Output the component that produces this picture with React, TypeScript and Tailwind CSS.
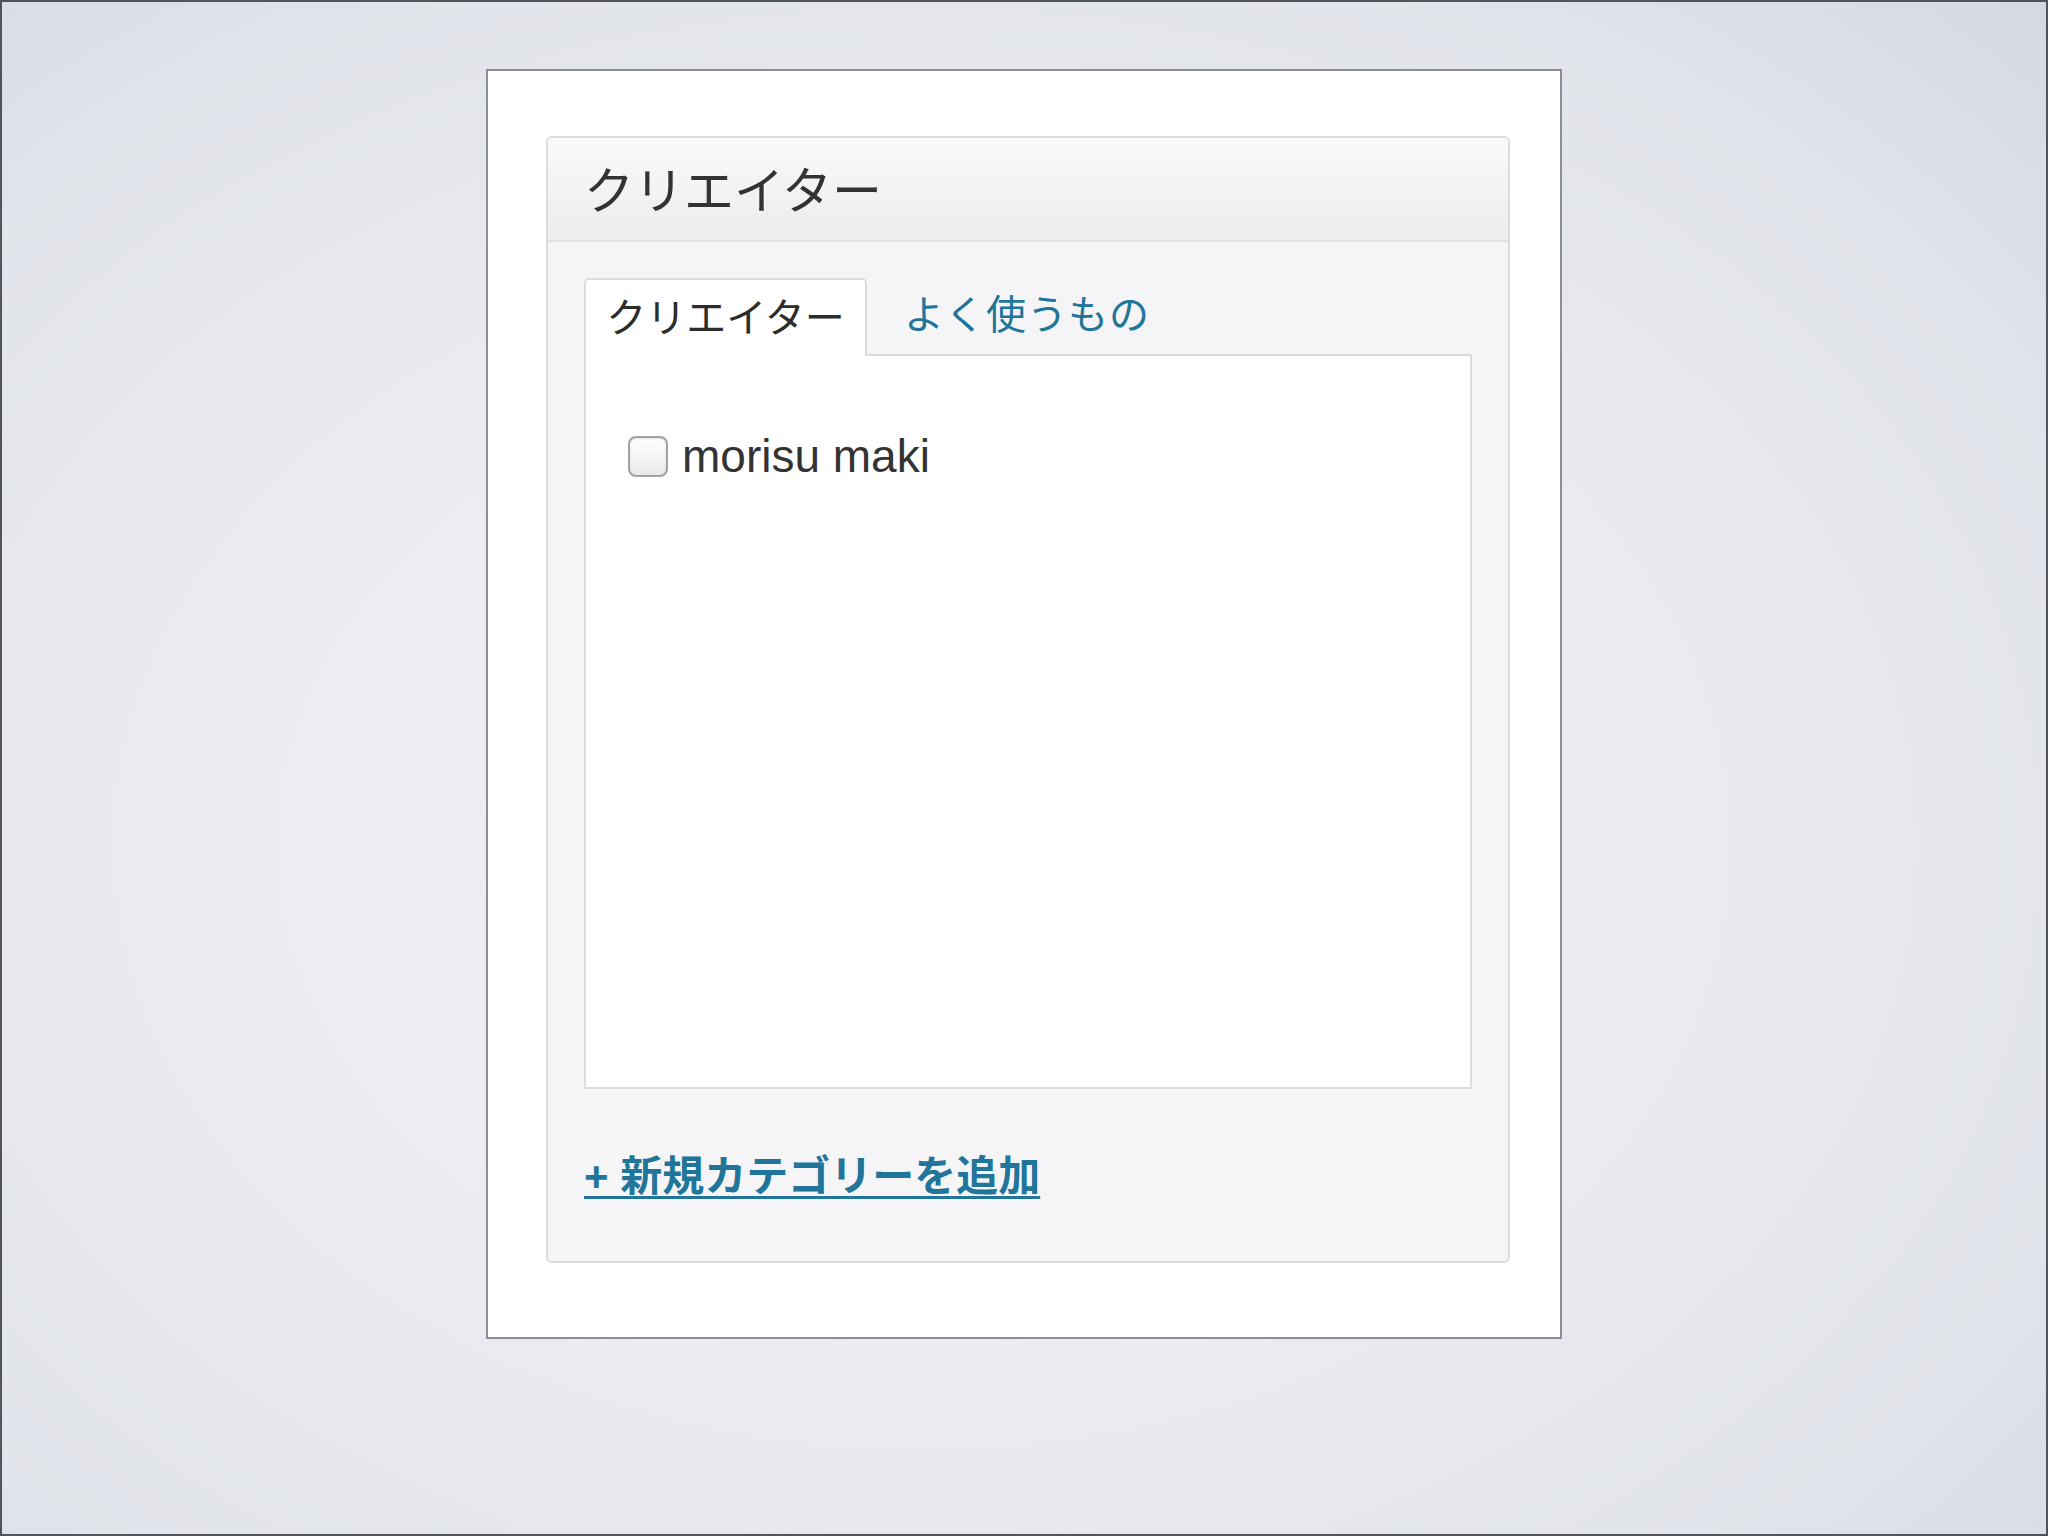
import React from "react";

export default function App() {
  const jp = { fontFamily: '"Liberation Sans", "Noto Sans CJK JP", sans-serif' };
  return (
    <div
      className="w-[2048px] h-[1536px] border-2 border-[#50555c] bg-[radial-gradient(ellipse_at_45%_55%,#f1f1f4_0%,#ebecf0_45%,#e0e3e9_80%,#d5d9e0_100%)] pt-[67px] pl-[484px] overflow-hidden"
      style={jp}
    >
      <div className="w-[1076px] h-[1270px] border-2 border-[#8b8e93] bg-white pt-[65px] pl-[58px]">
        <div className="w-[964px] h-[1127px] rounded-[6px] border-2 border-[#dcdcde] bg-[#f5f5f7] overflow-hidden flex flex-col">
          <div className="h-[104px] shrink-0 border-b-2 border-[#e2e2e4] bg-[linear-gradient(to_bottom,#fafafa,#ececed)] flex items-center pl-[36px] pt-[6px]">
            <span className="text-[50px] leading-none text-[#333333]">クリエイター</span>
          </div>
          <div className="flex-1 pl-[36px] pt-[34px]">
            <div className="flex items-end">
              <div className="relative z-10 -mb-[2px] w-[283px] h-[78px] rounded-t-[5px] border-2 border-b-0 border-[#dcdcde] bg-white flex items-center justify-center">
                <span className="text-[40px] leading-none text-[#2c2c2c]">クリエイター</span>
              </div>
              <div className="h-[78px] flex items-center pl-[37px]">
                <span className="text-[40px] leading-none text-[#21759b] tracking-[1px]">よく使うもの</span>
              </div>
            </div>
            <div className="w-[888px] h-[735px] border-2 border-[#dcdcde] bg-white pl-[42px] pt-[77px]">
              <label className="flex items-center gap-[14px]">
                <span className="w-[40px] h-[41px] rounded-[8px] border-2 border-[#a3a3a5] bg-[linear-gradient(to_bottom,#ffffff,#e9e9eb)] shadow-[inset_0_1px_2px_rgba(0,0,0,0.12)] block"></span>
                <span className="text-[46px] leading-none text-[#333333]">morisu maki</span>
              </label>
            </div>
            <div className="pt-[62px]">
              <span className="text-[42px] leading-[52px] font-bold text-[#21759b] underline decoration-[3px] underline-offset-[5px]">
                + 新規カテゴリーを追加
              </span>
            </div>
          </div>
        </div>
      </div>
    </div>
  );
}
